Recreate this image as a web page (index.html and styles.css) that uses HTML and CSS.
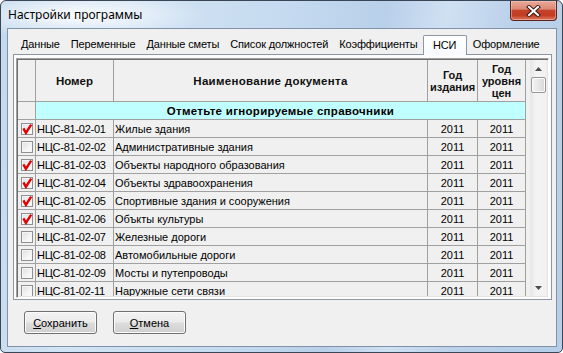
FILE: index.html
```html
<!DOCTYPE html>
<html lang="ru">
<head>
<meta charset="utf-8">
<title>Настройки программы</title>
<link rel="stylesheet" href="styles.css">
</head>
<body>
<div class="window">
  <div class="titlebar">
    <span class="title">Настройки программы</span>
    <div class="close-btn">
      <svg width="15" height="12" viewBox="0 0 15 12">
        <path d="M3 2 L12 10 M12 2 L3 10" stroke="#3a1a14" stroke-width="4" stroke-linecap="square" fill="none"/>
        <path d="M3 2 L12 10 M12 2 L3 10" stroke="#ffffff" stroke-width="2" stroke-linecap="square" fill="none"/>
      </svg>
    </div>
  </div>
  <div class="client">
    <div class="tabs">
      <span class="tab">Данные</span>
      <span class="tab">Переменные</span>
      <span class="tab">Данные сметы</span>
      <span class="tab">Список должностей</span>
      <span class="tab">Коэффициенты</span>
      <span class="tab active">НСИ</span>
      <span class="tab">Оформление</span>
    </div>
    <div class="panel">
      <div class="grid">
        <div class="grid-body">
          <table class="sheet">
            <colgroup>
              <col class="c-ind"><col class="c-num"><col class="c-name"><col class="c-y1"><col class="c-y2">
            </colgroup>
            <thead>
              <tr class="head">
                <th></th>
                <th>Номер</th>
                <th class="wide">Наименование документа</th>
                <th class="year">Год<br>издания</th>
                <th class="year">Год<br>уровня<br>цен</th>
              </tr>
            </thead>
            <tbody>
              <tr class="group"><td class="ind"></td><td colspan="4">Отметьте игнорируемые справочники</td></tr>
              <tr><td class="ind"><span class="cb"><svg width="12" height="12" viewBox="0 0 12 12"><path d="M2.4 5.4 L4.9 9.9 L10.2 1.6" stroke="#e60000" stroke-width="2.4" fill="none"/></svg></span></td><td class="code">НЦС-81-02-01</td><td class="name">Жилые здания</td><td class="num">2011</td><td class="num">2011</td></tr>
              <tr><td class="ind"><span class="cb"></span></td><td class="code">НЦС-81-02-02</td><td class="name">Административные здания</td><td class="num">2011</td><td class="num">2011</td></tr>
              <tr><td class="ind"><span class="cb"><svg width="12" height="12" viewBox="0 0 12 12"><path d="M2.4 5.4 L4.9 9.9 L10.2 1.6" stroke="#e60000" stroke-width="2.4" fill="none"/></svg></span></td><td class="code">НЦС-81-02-03</td><td class="name">Объекты народного образования</td><td class="num">2011</td><td class="num">2011</td></tr>
              <tr><td class="ind"><span class="cb"><svg width="12" height="12" viewBox="0 0 12 12"><path d="M2.4 5.4 L4.9 9.9 L10.2 1.6" stroke="#e60000" stroke-width="2.4" fill="none"/></svg></span></td><td class="code">НЦС-81-02-04</td><td class="name">Объекты здравоохранения</td><td class="num">2011</td><td class="num">2011</td></tr>
              <tr><td class="ind"><span class="cb"><svg width="12" height="12" viewBox="0 0 12 12"><path d="M2.4 5.4 L4.9 9.9 L10.2 1.6" stroke="#e60000" stroke-width="2.4" fill="none"/></svg></span></td><td class="code">НЦС-81-02-05</td><td class="name">Спортивные здания и сооружения</td><td class="num">2011</td><td class="num">2011</td></tr>
              <tr><td class="ind"><span class="cb"><svg width="12" height="12" viewBox="0 0 12 12"><path d="M2.4 5.4 L4.9 9.9 L10.2 1.6" stroke="#e60000" stroke-width="2.4" fill="none"/></svg></span></td><td class="code">НЦС-81-02-06</td><td class="name">Объкты культуры</td><td class="num">2011</td><td class="num">2011</td></tr>
              <tr><td class="ind"><span class="cb"></span></td><td class="code">НЦС-81-02-07</td><td class="name">Железные дороги</td><td class="num">2011</td><td class="num">2011</td></tr>
              <tr><td class="ind"><span class="cb"></span></td><td class="code">НЦС-81-02-08</td><td class="name">Автомобильные дороги</td><td class="num">2011</td><td class="num">2011</td></tr>
              <tr><td class="ind"><span class="cb"></span></td><td class="code">НЦС-81-02-09</td><td class="name">Мосты и путепроводы</td><td class="num">2011</td><td class="num">2011</td></tr>
              <tr><td class="ind"><span class="cb"></span></td><td class="code">НЦС-81-02-11</td><td class="name">Наружные сети связи</td><td class="num">2011</td><td class="num">2011</td></tr>
            </tbody>
          </table>
        </div>
        <div class="scrollbar">
          <div class="sb-btn"><svg width="7" height="4" viewBox="0 0 7 4"><path d="M3.5 0 L7 4 L0 4 Z" fill="#4d4d4d"/></svg></div>
          <div class="sb-track"><div class="sb-thumb"></div></div>
          <div class="sb-btn"><svg width="7" height="4" viewBox="0 0 7 4"><path d="M0 0 L7 0 L3.5 4 Z" fill="#4d4d4d"/></svg></div>
        </div>
      </div>
    </div>
    <div class="buttons">
      <button class="btn"><u>С</u>охранить</button>
      <button class="btn"><u>О</u>тмена</button>
    </div>
  </div>
</div>
</body>
</html>
```

FILE: styles.css
```css
* { box-sizing: border-box; }
html, body { margin: 0; padding: 0; }
body {
  width: 563px;
  height: 353px;
  overflow: hidden;
  background: #ffffff;
  font-family: "Liberation Sans", Arial, sans-serif;
  font-size: 11px;
  color: #000;
}

.window {
  width: 563px;
  height: 353px;
  border: 1px solid #3a4656;
  border-radius: 6px 6px 5px 5px;
  background:
    radial-gradient(ellipse 130px 24px at 75px 14px, rgba(255,255,255,0.9), rgba(255,255,255,0) 100%),
    linear-gradient(100deg, #c3d8ee 0%, #d2e3f4 20%, #c6dbf0 45%, #b9d0ea 62%, #cfe0f2 72%, #bcd2eb 82%, #b6cee9 100%);
  display: flex;
  flex-direction: column;
  overflow: hidden;
}

.titlebar {
  height: 27px;
  flex: none;
  display: flex;
  justify-content: space-between;
  align-items: flex-start;
  padding: 0 5px 0 7px;
}
.title {
  font-family: "Noto Sans", "Liberation Sans", sans-serif;
  font-size: 12px;
  line-height: 28px;
  color: #000;
}
.close-btn {
  width: 47px;
  height: 20px;
  border: 1px solid #5a2619;
  border-top: none;
  border-radius: 0 0 4px 4px;
  background: linear-gradient(to bottom, #e9a99a 0%, #dd8a76 42%, #c5432a 50%, #c23b22 75%, #dc7a60 100%);
  box-shadow: inset 0 0 0 1px rgba(255,210,200,0.45);
  display: flex;
  align-items: center;
  justify-content: center;
}

.client {
  flex: 1;
  margin: 0 5px 5px 6px;
  border: 1px solid #7f92a8;
  background: #f0f0f0;
  display: flex;
  flex-direction: column;
}

.tabs {
  height: 25px;
  flex: none;
  display: flex;
  align-items: flex-end;
  margin: 0 4px 0 5px;
  padding-left: 2.5px;
}
.tab {
  height: 18px;
  line-height: 16px;
  padding: 0 5.5px;
  white-space: nowrap;
  letter-spacing: -0.15px;
}
.tab.active {
  height: 20px;
  line-height: 19px;
  padding: 0 10px 0 9px;
  margin: 0 0 -1px;
  border: 1px solid #8c97a6;
  border-bottom: none;
  border-radius: 2px 2px 0 0;
  background: linear-gradient(to bottom, #ffffff, #f7fafd);
  position: relative;
  z-index: 1;
}

.panel {
  height: 246px;
  flex: none;
  margin: 0 4px 0 5px;
  border: 1px solid #8c97a6;
  background: #fcfcfc;
  padding: 3px 2px 1px 2px;
}

.grid {
  height: 240px;
  border: 1px solid;
  border-color: #a0a0a0 #ffffff #ffffff #a0a0a0;
  box-shadow: inset 1px 1px 0 #6d6d6d, inset -1px -1px 0 #e3e3e3;
  padding: 1px;
  background: #f0f0f0;
  display: flex;
}
.grid-body {
  flex: 1;
  overflow: hidden;
}

.sheet {
  table-layout: fixed;
  width: 508px;
  border-collapse: separate;
  border-spacing: 0;
}
.c-ind { width: 18px; }
.c-num { width: 78px; }
.c-name { width: 314px; }
.c-y1 { width: 50px; }
.c-y2 { width: 48px; }

.sheet th, .sheet td {
  border-right: 1px solid #a0a0a0;
  border-bottom: 1px solid #a0a0a0;
  padding: 0;
  white-space: nowrap;
  overflow: hidden;
}
.sheet th {
  height: 42px;
  font-weight: bold;
  font-size: 11.5px;
  line-height: 12px;
  text-align: center;
  vertical-align: middle;
  background: #f0f0f0;
  color: #111;
}
.sheet th.wide { letter-spacing: 0.3px; }
.sheet th.year { font-size: 11px; }
.sheet td {
  height: 18px;
  line-height: 16px;
  vertical-align: middle;
}
.group td {
  background: #c0ffff;
  font-weight: bold;
  font-size: 11.5px;
  letter-spacing: 0.3px;
  text-align: center;
}
.group td.ind { background: #f0f0f0; }
.code { padding-left: 1px !important; letter-spacing: -0.25px; }
.name { padding-left: 1px !important; }
.num { text-align: center; }

.cb {
  display: block;
  width: 12px;
  height: 12px;
  margin-left: 3px;
  border: 1px solid #8e8f8f;
  background: linear-gradient(135deg, #dedede 0%, #f4f4f4 60%, #ffffff 100%);
  box-shadow: inset 0 0 0 1px #f6f6f6;
}
.cb svg {
  display: block;
  margin: -1px 0 0 -1px;
}

.scrollbar {
  width: 17px;
  flex: none;
  display: flex;
  flex-direction: column;
  background: linear-gradient(to right, #e6e6e6, #f4f4f4 40%, #f1f1f1);
}
.sb-btn {
  height: 17px;
  flex: none;
  display: flex;
  align-items: center;
  justify-content: center;
}
.sb-track {
  flex: 1;
  padding: 0 1px 0 1px;
}
.sb-thumb {
  height: 16px;
  border: 1px solid #979797;
  border-radius: 2px;
  background: linear-gradient(to right, #f4f4f4, #e6e6e6 50%, #d8d8d8);
  box-shadow: inset 0 0 0 1px #fbfbfb;
}

.buttons {
  display: flex;
  gap: 16px;
  padding: 11px 0 0 16px;
}
.btn {
  width: 73px;
  height: 23px;
  border: 1px solid #707070;
  border-radius: 3px;
  background: linear-gradient(to bottom, #f2f2f2 0%, #ebebeb 48%, #dddddd 52%, #cfcfcf 100%);
  box-shadow: inset 0 0 0 1px #fbfbfb;
  font-family: "Liberation Sans", Arial, sans-serif;
  font-size: 11px;
  color: #000;
  padding: 0;
}
```
